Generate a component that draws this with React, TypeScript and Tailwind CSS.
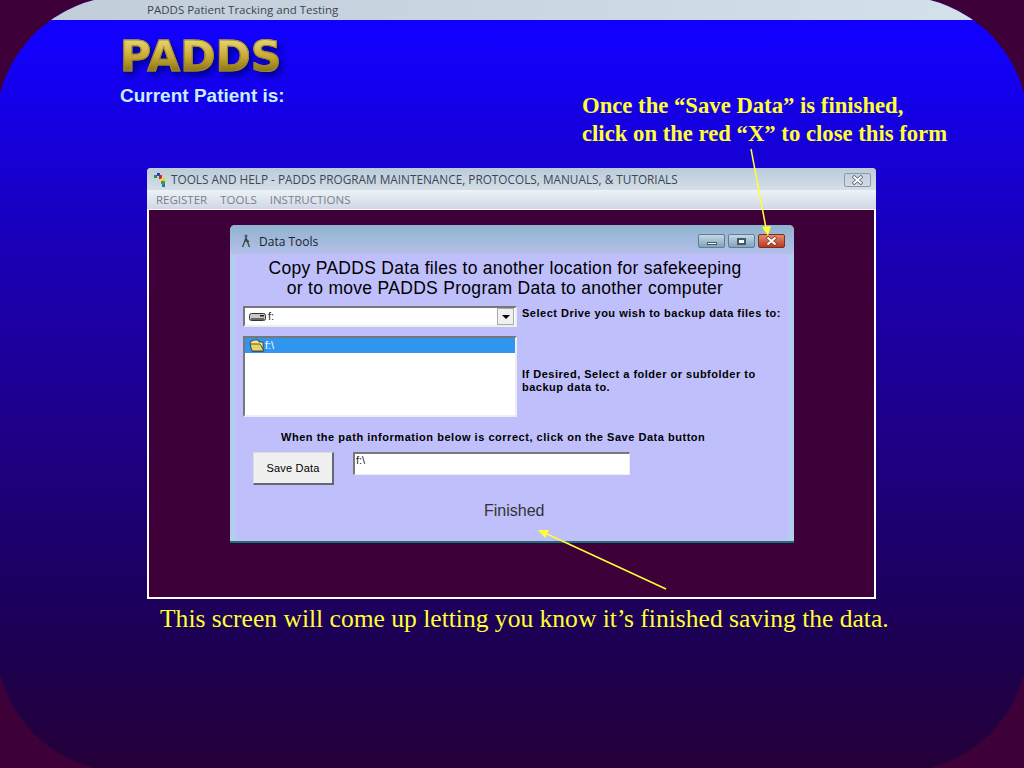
const serif = "font-['Liberation_Serif',serif]"

function AppIcon() {
  return (
    <svg width="16" height="16" viewBox="0 0 16 16" className="shrink-0">
      <rect x="2" y="3" width="3" height="3" fill="#1a9a3c" />
      <rect x="5" y="1" width="3" height="3" fill="#1c3fd0" />
      <rect x="7" y="3" width="3" height="4" fill="#e02020" />
      <rect x="9" y="6" width="4" height="3" fill="#f2d020" />
      <rect x="9" y="9" width="4" height="3" fill="#2f9f60" />
      <rect x="10" y="12" width="3" height="3" fill="#3a70a0" />
    </svg>
  )
}

function WalkerIcon() {
  return (
    <svg width="10" height="14" viewBox="0 0 10 14" className="shrink-0">
      <circle cx="5" cy="2" r="1.5" fill="#555" />
      <path d="M5 3.5 L3.5 8 L1.5 13 M5 3.5 L6.5 8 L8.5 13 M3.8 7 L6.5 7 M5 5 L8 8" stroke="#444" strokeWidth="1.3" fill="none" />
    </svg>
  )
}

// white X with a dark edge, same on both window close buttons
function CloseGlyph({ edge }: { edge: string }) {
  return (
    <svg width="13" height="10" viewBox="0 0 13 10" className="shrink-0">
      <path d="M2 1 L11 9 M11 1 L2 9" stroke={edge} strokeWidth="3.4" fill="none" />
      <path d="M2.5 1.5 L10.5 8.5 M10.5 1.5 L2.5 8.5" stroke="#ffffff" strokeWidth="2" fill="none" />
    </svg>
  )
}

function DriveIcon() {
  return (
    <svg width="18" height="10" viewBox="0 0 18 10" className="shrink-0">
      <rect x="0.5" y="1.5" width="16" height="7" rx="2" fill="#c8c8c8" stroke="#333" />
      <rect x="2" y="6" width="13" height="2" fill="#666" />
      <rect x="11" y="3" width="4" height="1.5" fill="#222" />
    </svg>
  )
}

function FolderIcon() {
  return (
    <svg width="16" height="13" viewBox="0 0 16 13" className="shrink-0">
      <path d="M1 3 L5 1 L9 1 L10 3 L14 3 L14 12 L3 12 Z" fill="#f4e58a" stroke="#333" strokeWidth="0.8" />
      <path d="M1 5 L11 5 L15 12 L3 12 Z" fill="#e8d468" stroke="#333" strokeWidth="0.8" />
    </svg>
  )
}

function DataTools() {
  return (
    <div className="w-[564px] h-[318px] flex flex-col rounded-t-[5px] overflow-hidden bg-[#bfbffb] border-b-2 border-b-[#1f6f78]">
      <div className="h-[29px] shrink-0 flex items-center pl-[11px] pr-[9px] pt-[3px] bg-gradient-to-b from-[#8fb3cd] to-[#b4c0ea]">
        <WalkerIcon />
        <span className="ml-[8px] mt-[1px] text-[12px] text-[#1c1c2c] font-['Open_Sans',sans-serif]">Data Tools</span>
        <div className="ml-auto flex gap-[3px]">
          <div className="w-[27px] h-[14px] rounded-[2px] border border-[#5f7f96] bg-gradient-to-b from-[#c7d7e4] to-[#7fa3bb] flex items-end justify-center pb-[2px]">
            <div className="w-[10px] h-[3px] bg-white border border-[#44586a]" />
          </div>
          <div className="w-[27px] h-[14px] rounded-[2px] border border-[#5f7f96] bg-gradient-to-b from-[#c7d7e4] to-[#7fa3bb] flex items-center justify-center">
            <div className="w-[9px] h-[7px] bg-white border-2 border-[#44586a]" />
          </div>
          <div className="w-[27px] h-[14px] rounded-[2px] border border-[#7a3020] bg-gradient-to-b from-[#e08a70] to-[#b83a20] flex items-center justify-center">
            <CloseGlyph edge="#8a3a28" />
          </div>
        </div>
      </div>

      <div className="flex-1 flex flex-col border-x-[6px] border-x-[#b4cdee] pl-[7px]">
        <div className="w-[524px] text-center text-[17.5px] leading-[20px] text-black font-['Liberation_Sans',sans-serif] tracking-[0.3px] pt-[4px]">
          <p>Copy PADDS Data files to another location for safekeeping</p>
          <p>or to move PADDS Program Data to another computer</p>
        </div>

        <div className="flex mt-[8px]">
          <div className="w-[274px] shrink-0 flex flex-col gap-[9px]">
            <div className="h-[21px] flex items-center bg-white border-2 border-t-[#777] border-l-[#777] border-r-[#eee] border-b-[#eee] pl-[4px] pr-[1px]">
              <DriveIcon />
              <span className="ml-[1px] text-[11px] text-[#222] font-['Liberation_Sans',sans-serif]">f:</span>
              <div className="ml-auto w-[17px] h-[17px] bg-[#f0f0f0] border border-[#aaa] flex items-center justify-center">
                <div className="w-0 h-0 border-x-[4px] border-x-transparent border-t-[4px] border-t-black" />
              </div>
            </div>
            <div className="h-[81px] bg-white border-2 border-t-[#777] border-l-[#777] border-r-[#eee] border-b-[#eee]">
              <div className="h-[15px] flex items-center bg-[#3096f0] pl-[4px]">
                <FolderIcon />
                <span className="text-[11px] text-white font-['Liberation_Sans',sans-serif]">f:\</span>
              </div>
            </div>
          </div>
          <div className="ml-[5px] flex flex-col text-[11px] leading-[13px] font-bold text-black font-['Liberation_Sans',sans-serif] tracking-[0.5px]">
            <p className="pt-[1px]">Select Drive you wish to backup data files to:</p>
            <p className="mt-[48px] w-[255px]">If Desired, Select a folder or subfolder to backup data to.</p>
          </div>
        </div>

        <p className="mt-[14px] ml-[38px] text-[11px] leading-[13px] font-bold text-black font-['Liberation_Sans',sans-serif] tracking-[0.53px]">
          When the path information below is correct, click on the Save Data button
        </p>

        <div className="flex mt-[8px] ml-[10px]">
          <button className="w-[81px] h-[33px] bg-[#f0f0f0] border border-[#ddd] border-r-2 border-b-2 border-r-[#667] border-b-[#667] text-[11px] text-black font-['Liberation_Sans',sans-serif] tracking-[0.2px]">
            Save Data
          </button>
          <div className="ml-[19px] w-[277px] h-[23px] bg-white border-t-2 border-l-2 border-r border-b border-t-[#777] border-l-[#777] border-r-[#eee] border-b-[#eee] text-[11px] text-[#222] font-['Liberation_Sans',sans-serif] pl-[1px] leading-[13px]">
            f:\
          </div>
        </div>

        <p className="mt-[16px] ml-[241px] text-[16px] leading-[20px] text-[#333] font-['Liberation_Sans',sans-serif]">Finished</p>
      </div>
    </div>
  )
}

export default function App() {
  return (
    <div className="w-[1024px] h-[768px] overflow-hidden bg-[#3e0038]">
      {/* panel runs 4px past the page on every side, that is how the corners sit in the picture */}
      <div className="w-[1032px] h-[776px] -ml-1 -mt-1 rounded-[130px] overflow-hidden flex flex-col bg-[linear-gradient(to_bottom,#1200ff_5%,#1a00b0_35%,#1e0090_52%,#1c0068_72%,#1c0050_85%,#250038_100%)]">
        <div className="h-6 shrink-0 pt-1 pl-[151px] flex items-center text-[11.5px] text-[#3c4450] font-['Open_Sans',sans-serif] bg-gradient-to-r from-[#c0ccd8] to-[#d4e2ec]">
          PADDS Patient Tracking and Testing
        </div>

        <div className="h-[148px] shrink-0 flex pl-1">
          <div className="w-[582px] shrink-0 pl-[120px] pt-[15px]">
            <p className="text-[42.5px] leading-[44px] font-bold font-['DejaVu_Sans',sans-serif] text-transparent bg-clip-text bg-gradient-to-b from-[#f0e080] via-[#c8a830] to-[#6a5a10] [filter:drop-shadow(3px_4px_3px_#000090)] w-fit pr-[4px] [-webkit-text-stroke:1px_#a08a24]">
              PADDS
            </p>
            <p className="mt-[6px] text-[19px] leading-[22px] font-bold text-[#c4f0ff] font-['Liberation_Sans',sans-serif]">Current Patient is:</p>
          </div>
          <div className={`pt-[72px] text-[22.7px] leading-[28px] font-bold text-[#ffff33] whitespace-nowrap ${serif}`}>
            <p>Once the “Save Data” is finished,</p>
            <p>click on the red “X” to close this form</p>
          </div>
        </div>

        <div className="ml-[151px] w-[729px] h-[431px] shrink-0 flex flex-col rounded-t-[4px] overflow-hidden bg-[#c8d4de]">
          <div className="h-[22px] shrink-0 flex items-center pl-[5px] pr-[5px] pt-[2px] bg-gradient-to-b from-[#bccbd8] to-[#d4dfe8]">
            <AppIcon />
            <span className="ml-[3px] text-[11.8px] text-[#3c4654] font-['Open_Sans',sans-serif]">
              TOOLS AND HELP - PADDS PROGRAM MAINTENANCE, PROTOCOLS, MANUALS, &amp; TUTORIALS
            </span>
            <div className="ml-auto w-[27px] h-[14px] rounded-[2px] border border-[#8a9aa8] flex items-center justify-center">
              <CloseGlyph edge="#4c5660" />
            </div>
          </div>
          <div className="h-[19px] shrink-0 flex items-center gap-[13px] pl-[9px] text-[11.5px] text-[#7a8088] font-['Open_Sans',sans-serif] bg-gradient-to-b from-[#eef2f8] to-[#d0d8e6]">
            <span>REGISTER</span>
            <span>TOOLS</span>
            <span>INSTRUCTIONS</span>
          </div>
          <div className="flex-1 border-2 border-t border-white bg-[#3e0038] pl-[81px] pt-[15px]">
            <DataTools />
          </div>
        </div>

        <p className={`mt-[4px] ml-[164px] text-[25.55px] leading-[32px] text-[#ffff33] whitespace-nowrap ${serif}`}>
          This screen will come up letting you know it’s finished saving the data.
        </p>
      </div>

      <svg className="absolute left-0 top-0 pointer-events-none" width="1024" height="768" viewBox="0 0 1024 768">
        <line x1="751" y1="149" x2="766" y2="228" stroke="#ffff33" strokeWidth="1.5" />
        <path d="M768 236 L762 227 L771 226 Z" fill="#ffff33" />
        <line x1="666" y1="589" x2="545" y2="533" stroke="#ffff33" strokeWidth="1.5" />
        <path d="M538 530 L549 530 L545 538 Z" fill="#ffff33" />
      </svg>
    </div>
  )
}
